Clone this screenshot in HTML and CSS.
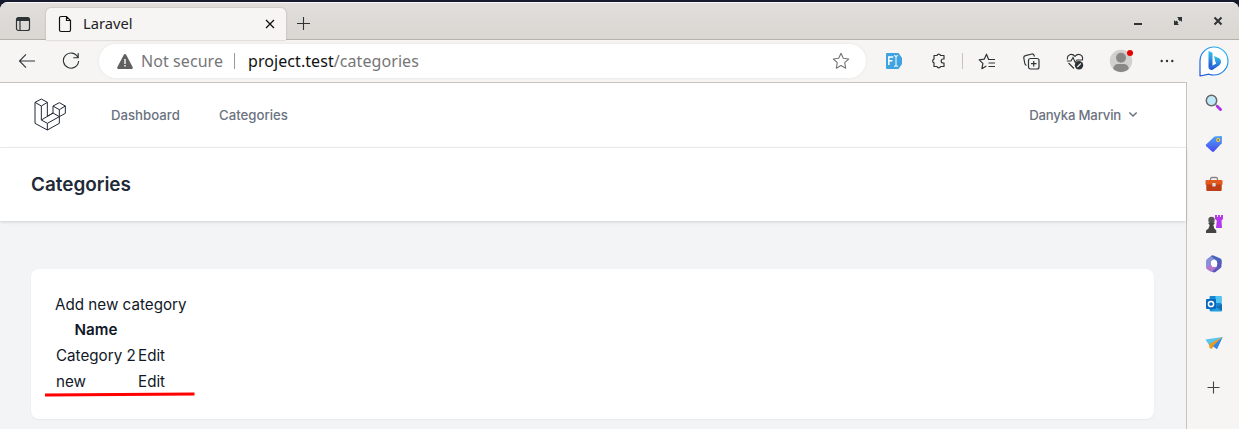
FILE: index.html
```
<!DOCTYPE html>
<html lang="en">
<head>
<meta charset="UTF-8">
<meta name="viewport" content="width=device-width, initial-scale=1.0">
<title>Laravel</title>
<link rel="stylesheet" href="styles.css">
</head>
<body>
<div class="window">
    <div class="tab-bar">
        <div class="workspace">
            <svg width="16" height="16" viewBox="0 0 16 16"><rect x="1.5" y="1.5" width="13" height="13" rx="2" fill="none" stroke="#2e3436" stroke-width="1.2"/><path d="M1.5 3.5a2 2 0 0 1 2-2h9a2 2 0 0 1 2 2V5h-13z" fill="#2e3436"/><path d="M5 5v9" stroke="#2e3436" stroke-width="1.2"/></svg>
        </div>
        <div class="tab">
            <svg width="14" height="18" viewBox="0 0 14 18" fill="none" stroke="#111" stroke-width="1.2"><path d="M3 1.5h5.5l4 4V15a1.5 1.5 0 0 1-1.5 1.5H3A1.5 1.5 0 0 1 1.5 15V3A1.5 1.5 0 0 1 3 1.5zM8.5 1.5V5.5h4"/></svg>
            <span class="tab-title">Laravel</span>
            <svg width="10" height="10" viewBox="0 0 10 10" stroke="#111" stroke-width="1.3"><path d="M1 1l8 8M9 1L1 9"/></svg>
        </div>
        <svg class="new-tab" width="15" height="15" viewBox="0 0 15 15" stroke="#2e3436" stroke-width="1.1"><path d="M7.5 1v13M1 7.5h13"/></svg>
        <div class="window-buttons">
            <svg width="10" height="10" viewBox="0 0 10 10"><path d="M1 7h8v2H1z" fill="#2e3436"/></svg>
            <svg width="10" height="10" viewBox="0 0 10 10" fill="#2e3436"><path d="M4 1h5v5L7.500 4.500 6.500 5.500 4.500 3.500 5.500 2.500zM1 4l1.500 1.500 1-1 2 2-1 1L6 9H1z"/><path d="M3.500 3L7 6.500" stroke="#dedbd8" stroke-width="1.600"/></svg>
            <svg width="10" height="10" viewBox="0 0 10 10" stroke="#2e3436" stroke-width="2"><path d="M1.5 1.5l7 7M8.5 1.5l-7 7"/></svg>
        </div>
    </div>

    <div class="toolbar">
        <div class="tool"><svg width="18" height="16" viewBox="0 0 18 16" fill="none" stroke="#2e3436" stroke-width="1.1"><path d="M8 1.3L1.5 8 8 14.7M1.5 8H17"/></svg></div>
        <div class="tool"><svg width="18" height="18" viewBox="0 0 18 18" fill="none" stroke="#2e3436" stroke-width="1.1"><path d="M15.8 5.2A7.6 7.6 0 1 0 16.6 9M16.2 1v4.7h-4.9"/></svg></div>
        <div class="address">
            <svg width="16" height="15" viewBox="0 0 16 15"><path d="M8 0q.8 0 1.3.9L15.6 13q.6 2-1 2H1.4q-1.6 0-1-2L6.7.9Q7.2 0 8 0z" fill="#606060"/><path d="M8 5v5M8 11v1.6" stroke="#fff" stroke-width="1.4"/></svg>
            <span class="not-secure">Not secure</span>
            <span class="divider"></span>
            <span class="url"><b>project.test</b>/categories</span>
            <svg class="star" width="18" height="18" viewBox="0 0 18 18" fill="none" stroke="#767676" stroke-width="1.1" stroke-linejoin="round"><path d="M9 1.3l2.3 5 5.4.7-4 3.7 1 5.5L9 13.5l-4.7 2.7 1-5.5-4-3.7 5.4-.7z"/></svg>
        </div>
        <div class="tool first"><svg width="16" height="16" viewBox="0 0 16 16"><path d="M1 0h11.5L16 5v6l-3.5 5H1q-1 0-1-1V1q0-1 1-1z" fill="#3fa3e0"/><path d="M2.8 12V4h4.5M2.8 7.8h3.7" fill="none" stroke="#fff" stroke-width="1.5"/><path d="M8 2.7h1.4L10 4l.6-1.3H12M10 4v8M8 13.3h1.4L10 12l.6 1.3H12" fill="none" stroke="#fff"/></svg></div>
        <div class="tool"><svg width="16" height="16" viewBox="0 0 16 16" fill="none" stroke="#2e3436" stroke-width="1.2" stroke-linejoin="round"><path d="M4 2.500h3a1.900 1.900 0 0 1 3.600 0H14V6h-.800a2 2 0 0 0 0 4h.800v3.500h-3.400a1.900 1.900 0 0 1-3.600 0H4v-3.600a2 2 0 0 1 0-3.800z"/></svg></div>
        <span class="tool-line"></span>
        <div class="tool"><svg width="18" height="17" viewBox="0 0 18 17" fill="none" stroke="#2e3436" stroke-width="1.2" stroke-linejoin="round"><path d="M10.5 6.2L8.5 1.2l-2.3 5-5 .7 3.7 3.500-1 5.300L8.300 13M10 6.500h7M10.500 10h6.500M10.500 13.500H17"/></svg></div>
        <div class="tool"><svg width="17" height="17" viewBox="0 0 17 17" fill="none" stroke="#2e3436" stroke-width="1.2"><rect x="5.5" y="5.5" width="10.5" height="10.5" rx="2"/><path d="M10.7 8v5.5M8 10.7h5.5M3.5 12.5Q2 12 1.7 10L.8 5Q.6 3 2.5 2.7L9 1q1.8-.3 2.5 2.5"/></svg></div>
        <div class="tool"><svg width="18" height="17" viewBox="0 0 18 17" fill="none" stroke="#2e3436" stroke-width="1.1"><path d="M1.5 6.5C.5 1.5 6-.3 9 3.3c3-3.6 8.5-1.8 7.5 3.2M.8 8H5l2-3.5 2.2 5L11 7h6M2.5 10L8 15.5"/><circle cx="13" cy="12.3" r="4.2" fill="#2e3436" stroke="none"/><path d="M11.3 14l3.5-3.5" stroke="#f6f5f4"/></svg></div>
        <div class="tool profile">
            <svg width="24" height="24" viewBox="0 0 24 24"><circle cx="12" cy="12" r="11.2" fill="#d2d0ce"/><circle cx="12" cy="8.7" r="5" fill="#8a8886"/><path d="M4.2 19.8Q5 15 9 15h6q4 0 4.8 4.8a11.2 11.2 0 0 1-15.6 0z" fill="#8a8886"/></svg>
            <i class="badge"></i>
        </div>
        <div class="tool dots"><svg width="14" height="4" viewBox="0 0 14 4" fill="#2e3436"><circle cx="1.7" cy="2" r="1.2"/><circle cx="7" cy="2" r="1.2"/><circle cx="12.3" cy="2" r="1.2"/></svg></div>
        <div class="tool bing"><svg width="32" height="33" viewBox="0 0 32 33">
            <defs><linearGradient id="bing" x1="0" y1="1" x2="1" y2="0"><stop offset="0" stop-color="#1b4dd8"/><stop offset="1" stop-color="#25c2ee"/></linearGradient><linearGradient id="b" x1="0" y1="0" x2="0" y2="1"><stop offset="0" stop-color="#37c6f1"/><stop offset="1" stop-color="#2050d0"/></linearGradient></defs>
            <path d="M2 31V16A14 14 0 1 1 16 30q-3 0-5-.8z" fill="#fff" stroke="url(#bing)" stroke-width="1.2" stroke-linejoin="round"/>
            <path d="M10.5 6l4 1.7v13.4l-4 2z" fill="url(#b)"/><path d="M16 11l5.2 2.3q2.2 1.3 1.8 4-.3 2-2 3.2l-6.3 4.2q-2.600 1-4.200-1.600l7.700-4.700-1-2.200z" fill="url(#b)"/>
        </svg></div>
    </div>

    <div class="content">
        <div class="page">
            <nav>
                <svg class="logo" width="33" height="34" viewBox="103 40 99 102" fill="none" stroke="#1f2937" stroke-width="3" stroke-linejoin="round"><path d="M106 53l19-10 18 10-18 11zM106 53v63l37 20 36-20V96l18-10V64l-18-10-19 10v21l-17 10V53M125 64v42l18 10 36-20-19-11-35 21M143 116v20M160 64l19 11 18-11M179 75v21"/></svg>
                <a class="dashboard">Dashboard</a>
                <a class="categories">Categories</a>
                <div class="user"><span>Danyka Marvin</span><svg width="10" height="7" viewBox="0 0 10 7" fill="none" stroke="#6b7280" stroke-width="1.6"><path d="M1.3 1.5L5 5l3.7-3.5"/></svg></div>
            </nav>
            <header><h2>Categories</h2></header>
            <main>
                <div class="card">
                    <a class="add">Add new category</a>
                    <table>
                        <thead><tr><th>Name</th><th></th></tr></thead>
                        <tbody>
                            <tr><td>Category 2</td><td>Edit</td></tr>
                            <tr><td>new</td><td>Edit</td></tr>
                        </tbody>
                    </table>
                    <svg class="underline" width="150" height="5" viewBox="0 0 150 5"><path d="M0 3L149.5 2" stroke="#f00" stroke-width="2.8"/></svg>
                </div>
            </main>
        </div>

        <aside>
            <div><svg width="18" height="18" viewBox="0 0 18 18"><path d="M11 11l1.5 1.500" stroke="#777" stroke-width="2"/><path d="M12.500 12.500l3 3" stroke="#ad32ed" stroke-width="3" stroke-linecap="round"/><circle cx="6.500" cy="6.500" r="5.200" fill="#bfe7fa" stroke="#666" stroke-width="1.500"/></svg></div>
            <div><svg width="18" height="18" viewBox="0 0 18 18"><defs><linearGradient id="tag" x1="0" y1="0" x2="0" y2="1"><stop offset="0" stop-color="#4ba3f7"/><stop offset="1" stop-color="#4a48ef"/></linearGradient></defs><path d="M9.5 1.5L16 1q1 0 1 1l-.3 6.300L9 16.500q-1 .9-2 0L1.300 11.300q-1-1 0-2z" fill="url(#tag)"/><circle cx="13.2" cy="5" r="1.500" fill="#4b68b8" stroke="#ffd52e" stroke-width="1.200"/></svg></div>
            <div><svg width="18" height="18" viewBox="0 0 18 18"><path d="M5.5 6V4q0-1.500 1.500-1.500h4q1.500 0 1.500 1.500v2" fill="none" stroke="#8b8585" stroke-width="1.300"/><rect x=".5" y="5" width="17" height="5" rx="1" fill="#e1591d"/><path d="M1.300 9.500h15.400V15q0 1-1 1H2.300q-1 0-1-1z" fill="#be3f16"/><rect x="7.300" y="8" width="3.400" height="3.500" rx=".7" fill="#ddd"/></svg></div>
            <div><svg width="18" height="18" viewBox="0 0 18 18"><path d="M10 0h2v2h1V0h2v2h1V0h2v4l-1.500 1.500L17 13h-6l.8-7.500L10 4z" fill="#b638ee"/><circle cx="6.500" cy="5" r="3.200" fill="#555"/><path d="M3.500 7.500h6v1.300L8.300 10l1 3.500 2 2V18H1v-2.500l2.500-2L4.700 10 3.500 8.800z" fill="#444"/></svg></div>
            <div><svg width="18" height="18" viewBox="0 0 18 18"><path d="M6 1Q7 0 8.500.5L15 3.300q1.500.7 1.500 2V9L12.500 6.500 9 4 5.500 6z" fill="#4865bd"/><path d="M16.500 5v6q0 1.500-1.500 2.500L10.500 17Q9 18 7 16.500L5 14.500l7-3V6z" fill="#5758bd"/><path d="M1 9.500L6 8l1 3.500 5 .5-5 4.500q-1 .5-2-.3l-3-2Q1 13.500 1 12z" fill="#b278cd"/><path d="M6 1L2 4Q1 5 1 6.500V12l5-2.500V6l3-2z" fill="#8791d5"/><path d="M7.500 5.700h3.300l1.700 3-1.700 3H7.500l-1.700-3z" fill="#fff"/></svg></div>
            <div><svg width="18" height="18" viewBox="0 0 18 18"><rect x="4.500" y="1" width="12" height="15" rx="1" fill="#1687d4"/><path d="M10.500 1h5q1 0 1 1v6h-6z" fill="#4fc5f2"/><path d="M5 16.500L17 9v6.500q0 1-1 1z" fill="#249ddd"/><path d="M11 12l6 4V9z" fill="#146fb4"/><rect x="1" y="4" width="10" height="10" rx="1" fill="#0868bd"/><circle cx="6" cy="9" r="2.600" fill="none" stroke="#fff" stroke-width="1.500"/></svg></div>
            <div><svg width="18" height="18" viewBox="0 0 18 18"><path d="M.5 4.500L17.500 2 4 10z" fill="#55c6f3"/><path d="M17.500 2L12 14 7.500 11z" fill="#3289e8"/><path d="M4 9L17.500 2 6.500 14 4.500 13z" fill="#e69b22"/><path d="M17.500 2L12 14 8 11z" fill="#3289e8"/></svg></div>
            <div class="plus"><svg width="13" height="13" viewBox="0 0 13 13" stroke="#444" stroke-width="1.1"><path d="M6.500.5v12M.5 6.500h12"/></svg></div>
        </aside>
    </div>
</div>
</body>
</html>
```
FILE: styles.css
```
* {
    box-sizing: border-box;
}

body, html {
    margin: 0;
    height: 100%;
    overflow: hidden;
    background: #171a2d;
}

svg {
    display: block;
    flex: none;
}

.window {
    height: 427px;
    margin-top: 2px;
    border-radius: 8px 8px 0 0;
    overflow: hidden;
    background: #f6f5f4;
    font-family: "Noto Sans", sans-serif;
}

.tab-bar {
    display: flex;
    align-items: center;
    height: 38px;
    border-top: 1px solid #f8f7f7;
    border-bottom: 1px solid #b5b0a8;
    background: linear-gradient(#e1dedb, #dad6d2);
}

.workspace {
    width: 46px;
    padding-left: 15px;
    padding-top: 5px;
}

.tab {
    display: flex;
    align-items: center;
    align-self: flex-end;
    width: 240px;
    height: 32px;
    margin-bottom: -1px;
    padding: 0 11px 0 12px;
    border-radius: 5px 5px 0 0;
    background: #f6f5f4;
    box-shadow: 0 0 2px #aaa59f;
}

.tab-title {
    flex: 1;
    margin-left: 11px;
    padding-bottom: 2px;
    color: #222;
    font-size: 14.7px;
}

.new-tab {
    margin: 5px 0 0 10px;
}

.window-buttons {
    display: flex;
    gap: 30px;
    margin-left: auto;
    margin-right: 16px;
}

.toolbar {
    display: flex;
    align-items: center;
    height: 42px;
    padding-left: 5px;
}

.tool {
    display: flex;
    flex: none;
    align-items: center;
    justify-content: center;
    width: 44px;
    height: 42px;
}

.address {
    display: flex;
    align-items: center;
    width: 767px;
    height: 34px;
    margin-left: 6px;
    padding: 0 16px 0 18px;
    border-radius: 17px;
    background: #fff;
    box-shadow: 0 0 3px #e5e3e1;
    color: #767676;
    font-size: 16px;
    letter-spacing: .07px;
}

.not-secure {
    width: 84px;
    margin-left: 8px;
    white-space: nowrap;
}

.divider {
    width: 1px;
    height: 16px;
    margin: 0 13px 0 9px;
    background: #999;
}

.url b {
    color: #111;
    font-weight: 400;
}

.star {
    margin-left: auto;
}

.first {
    margin-left: 6px;
}

.tool-line {
    width: 1px;
    height: 16px;
    margin: 0 2px;
    background: #c8c2bc;
}

.profile {
    position: relative;
    margin-left: 2px;
}

.badge {
    position: absolute;
    top: 10px;
    right: 10px;
    width: 6px;
    height: 6px;
    border-radius: 50%;
    background: #e60000;
}

.dots {
    margin-left: 2px;
}

.bing {
    margin-left: 3px;
}

.content {
    display: flex;
    height: 347px;
}

.page {
    width: 1187px;
    border-top: 1px solid #c8c2bc;
    border-right: 1px solid #c8c2bc;
    background: #f3f4f6;
    color: #111827;
    font-family: Inter, sans-serif;
    font-size: 16px;
    line-height: 24px;
}

nav {
    display: flex;
    align-items: center;
    height: 65px;
    padding: 0 48px 0 34px;
    border-bottom: 1px solid #eeeff1;
    background: #fff;
    color: #6b7280;
    font-size: 13.2px;
    font-weight: 500;
}

.dashboard {
    width: 68px;
    margin-left: 44px;
}

.categories {
    margin-left: 40px;
}

.user {
    display: flex;
    align-items: center;
    gap: 7px;
    margin-left: auto;
    padding-bottom: 1px;
    letter-spacing: -.2px;
}

header {
    display: flex;
    align-items: center;
    height: 73px;
    padding: 0 31px;
    background: #fff;
    box-shadow: 0 1px 3px rgba(0, 0, 0, .15);
}

h2 {
    margin: 0;
    color: #1f2937;
    font-size: 18.9px;
    font-weight: 600;
}

main {
    padding: 48px 32px 0 31px;
}

.card {
    position: relative;
    height: 150px;
    padding: 24px;
    border-radius: 8px;
    background: #fff;
    box-shadow: 0 1px 2px rgba(0, 0, 0, .05);
    font-size: 15.2px;
}

.add {
    display: block;
}

table {
    border-collapse: collapse;
}

th, td {
    height: 26px;
    padding: 1px;
    white-space: nowrap;
}

th {
    font-weight: 600;
}

th:first-child {
    width: 82px;
}

.underline {
    position: absolute;
    left: 14px;
    top: 123px;
}

aside {
    width: 52px;
    padding-left: 2px;
}

aside div {
    display: flex;
    align-items: center;
    justify-content: center;
    height: 40px;
}

aside div:first-child {
    height: 42px;
}

aside .plus {
    height: 46px;
    margin-left: -1px;
}
```
